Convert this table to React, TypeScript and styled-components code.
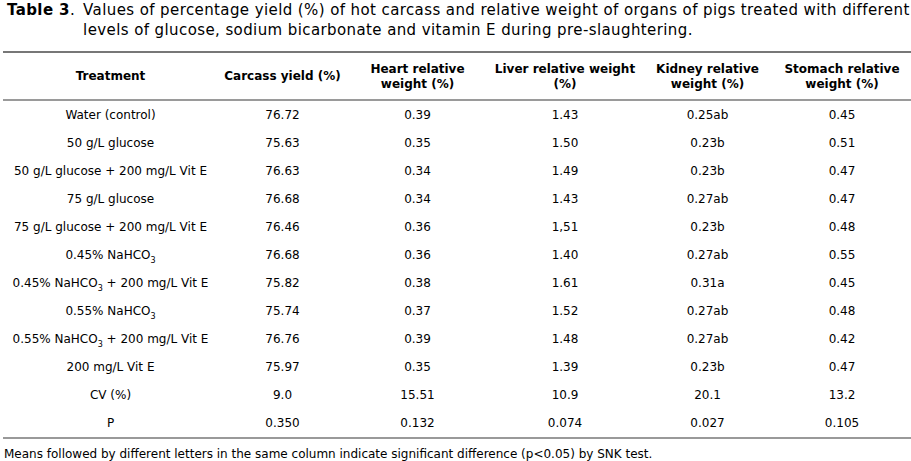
import React from 'react';
import styled, { createGlobalStyle } from 'styled-components';

const GlobalStyle = createGlobalStyle`
  body {
    margin: 0;
    background: #fff;
    color: #000;
    font-family: 'DejaVu Sans', Verdana, sans-serif;
  }
`;

const Page = styled.div`
  width: 911px;
  height: 461px;
  overflow: hidden;
`;

const Caption = styled.div`
  display: flex;
  padding-left: 7px;
  font-size: 15px;
  letter-spacing: 0.4px;
  line-height: 20px;
  height: 40px;
`;

const CaptionLabel = styled.span`
  flex: none;
  margin-right: 8px;

  b {
    font-weight: 700;
  }
`;

const CaptionText = styled.span`
  flex: 1;
`;

const Table = styled.table`
  margin: 11px 0 0 3px;
  width: 908px;
  border-collapse: collapse;
  table-layout: fixed;
  font-size: 12px;
  border-top: 2px solid #777;
  border-bottom: 2px solid #999;
`;

const HeadCell = styled.th`
  height: 45px;
  padding: 1px 4px 0;
  font-weight: 700;
  line-height: 15px;
  text-align: center;
  vertical-align: middle;
  border-bottom: 2px solid #9a9a9a;
`;

const Cell = styled.td`
  height: 28px;
  padding: 0 2px;
  text-align: center;
  vertical-align: middle;
  white-space: nowrap;

  sub {
    font-size: 8px;
    line-height: 0;
    vertical-align: -4px;
  }
`;

const Note = styled.div`
  margin: 7px 0 0 4px;
  font-size: 12px;
  line-height: 16px;
`;

const widths = [215, 129, 141, 154, 131, 138];

const headers = [
  'Treatment',
  'Carcass yield (%)',
  'Heart relative weight (%)',
  'Liver relative weight (%)',
  'Kidney relative weight (%)',
  'Stomach relative weight (%)',
];

const NaHCO3 = () => (
  <>
    NaHCO<sub>3</sub>
  </>
);

type Row = { label: React.ReactNode; values: string[] };

const rows: Row[] = [
  { label: 'Water (control)', values: ['76.72', '0.39', '1.43', '0.25ab', '0.45'] },
  { label: '50 g/L glucose', values: ['75.63', '0.35', '1.50', '0.23b', '0.51'] },
  { label: '50 g/L glucose + 200 mg/L Vit E', values: ['76.63', '0.34', '1.49', '0.23b', '0.47'] },
  { label: '75 g/L glucose', values: ['76.68', '0.34', '1.43', '0.27ab', '0.47'] },
  { label: '75 g/L glucose + 200 mg/L Vit E', values: ['76.46', '0.36', '1,51', '0.23b', '0.48'] },
  { label: <>0.45% <NaHCO3 /></>, values: ['76.68', '0.36', '1.40', '0.27ab', '0.55'] },
  { label: <>0.45% <NaHCO3 /> + 200 mg/L Vit E</>, values: ['75.82', '0.38', '1.61', '0.31a', '0.45'] },
  { label: <>0.55% <NaHCO3 /></>, values: ['75.74', '0.37', '1.52', '0.27ab', '0.48'] },
  { label: <>0.55% <NaHCO3 /> + 200 mg/L Vit E</>, values: ['76.76', '0.39', '1.48', '0.27ab', '0.42'] },
  { label: '200 mg/L Vit E', values: ['75.97', '0.35', '1.39', '0.23b', '0.47'] },
  { label: 'CV (%)', values: ['9.0', '15.51', '10.9', '20.1', '13.2'] },
  { label: 'P', values: ['0.350', '0.132', '0.074', '0.027', '0.105'] },
];

export default function App() {
  return (
    <Page>
      <GlobalStyle />
      <Caption>
        <CaptionLabel>
          <b>Table 3</b>.
        </CaptionLabel>
        <CaptionText>
          Values of percentage yield (%) of hot carcass and relative weight of organs of pigs treated
          with different levels of glucose, sodium bicarbonate and vitamin E during pre-slaughtering.
        </CaptionText>
      </Caption>
      <Table>
        <colgroup>
          {widths.map((w, i) => (
            <col key={i} style={{ width: w }} />
          ))}
        </colgroup>
        <thead>
          <tr>
            {headers.map((h) => (
              <HeadCell key={h}>{h}</HeadCell>
            ))}
          </tr>
        </thead>
        <tbody>
          {rows.map((r, i) => (
            <tr key={i}>
              <Cell>{r.label}</Cell>
              {r.values.map((v, j) => (
                <Cell key={j}>{v}</Cell>
              ))}
            </tr>
          ))}
        </tbody>
      </Table>
      <Note>
        Means followed by different letters in the same column indicate significant difference
        (p&lt;0.05) by SNK test.
      </Note>
    </Page>
  );
}
